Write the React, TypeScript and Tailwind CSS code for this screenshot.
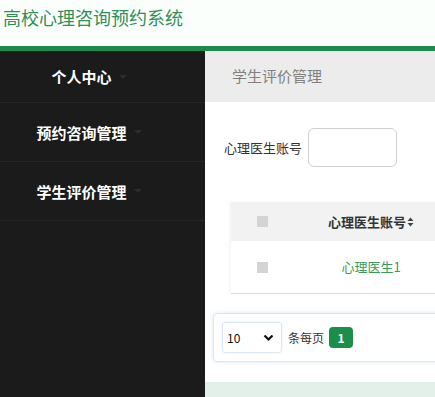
const font = "font-['Microsoft_YaHei','Noto_Sans_CJK_SC',sans-serif]";

function Caret() {
  return (
    <span className="absolute left-full top-1/2 ml-[7px] -translate-y-1/2 border-x-[4px] border-t-[4px] border-x-transparent border-t-[#2c2c2c]" />
  );
}

function SideItem({ label, first }: { label: string; first?: boolean }) {
  return (
    <div
      className={`flex items-center border-b border-dotted border-[#2e2e2e] ${first ? "h-[52px]" : "h-[59px]"}`}
    >
      <div className="w-[163px] text-center">
        <span className="relative text-[15px] font-semibold text-white">
          {label}
          <Caret />
        </span>
      </div>
    </div>
  );
}

function SortIcon() {
  return (
    <svg width="7" height="10" viewBox="0 0 7 10" className="ml-[1px] inline-block">
      <path d="M3.5 0.5 L6.5 4 H0.5 Z" fill="#444" />
      <path d="M3.5 9.5 L6.5 6 H0.5 Z" fill="#444" />
    </svg>
  );
}

export default function App() {
  return (
    <div className={`flex h-screen flex-col overflow-hidden bg-white ${font}`}>
      <header className="h-[46px] bg-[#fbfffc] pl-[3px] pt-[5px]">
        <h1 className="text-[18px] leading-[24px] text-[#2f8f57]">高校心理咨询预约系统</h1>
      </header>
      <div className="h-[5px] bg-[#1f8a4f]" />
      <div className="flex flex-1">
        <aside className="w-[205px] shrink-0 bg-[#1b1b1b]">
          <SideItem label="个人中心" first />
          <SideItem label="预约咨询管理" />
          <SideItem label="学生评价管理" />
        </aside>
        <main className="flex min-w-0 flex-1 flex-col overflow-hidden">
          <div className="flex h-[51px] items-center bg-[#ececec] pl-[27px] text-[15px] text-[#808080]">
            学生评价管理
          </div>
          <div className="mt-[26px] flex items-center pl-[19px]">
            <span className="text-[13px] text-[#333]">心理医生账号</span>
            <div className="ml-[6px] h-[39px] w-[89px] rounded-[6px] border border-[#cfcfcf] bg-white" />
          </div>
          <div className="mt-[35px] ml-[26px] w-[260px] shrink-0 shadow-[-2px_0_3px_rgba(0,0,0,0.04)]">
            <div className="flex h-[39px] items-center bg-[#f2f2f2]">
              <div className="flex w-[62px] justify-center">
                <span className="h-[11px] w-[11px] bg-[#d4d4d4]" />
              </div>
              <div className="flex w-[156px] items-center justify-center text-[13px] font-semibold text-[#333]">
                心理医生账号
                <SortIcon />
              </div>
            </div>
            <div className="flex h-[53px] items-center border-b border-[#dcdcdc] bg-white">
              <div className="flex w-[62px] justify-center">
                <span className="h-[11px] w-[11px] bg-[#d4d4d4]" />
              </div>
              <div className="w-[156px] text-center text-[13px] text-[#3a9a5c]">心理医生1</div>
            </div>
          </div>
          <div className="mt-[19px] ml-[8px] flex h-[49px] w-[260px] shrink-0 items-center rounded-[4px] border border-[#d7e8f4] pl-[8px] shadow-[0_0_4px_rgba(120,170,210,0.25)]">
            <div className="flex h-[31px] w-[60px] items-center justify-between rounded-[3px] border border-[#dde8f1] pl-[4px] pr-[7px] text-[12px] text-[#111] shadow-[0_0_3px_rgba(120,170,210,0.2)]">
              10
              <svg width="11" height="8" viewBox="0 0 11 8">
                <path d="M1.5 1.5 L5.5 5.5 L9.5 1.5" fill="none" stroke="#111" strokeWidth="2.2" />
              </svg>
            </div>
            <span className="ml-[6px] text-[12px] text-[#333]">条每页</span>
            <span className="ml-[5px] flex h-[21px] w-[24px] items-center justify-center rounded-[4px] bg-[#1a8f4a] text-[12px] font-semibold text-white">
              1
            </span>
          </div>
          <div className="mt-auto h-[15px] shrink-0 bg-[#e3f0e9]" />
        </main>
      </div>
    </div>
  );
}
